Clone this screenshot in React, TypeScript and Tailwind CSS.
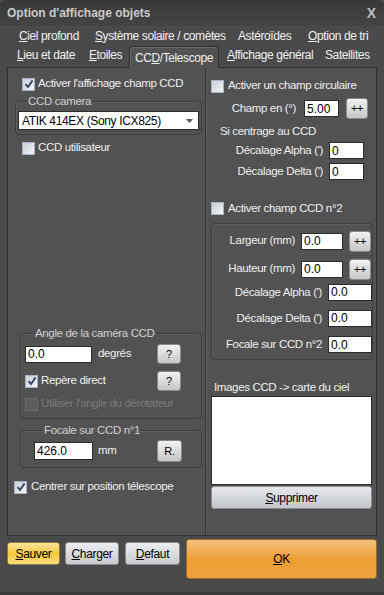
import React from 'react'

function Check({ checked = false, disabled = false }: { checked?: boolean; disabled?: boolean }) {
  return (
    <span
      className={
        disabled
          ? 'w-[13px] h-[13px] shrink-0 flex items-center justify-center border border-[#6a6a6a] bg-[#5d5d5d]'
          : 'w-[13px] h-[13px] shrink-0 flex items-center justify-center border border-[#a7b2c4] bg-linear-to-br from-[#c9ced6] to-[#f5f5f5]'
      }
    >
      {checked && (
        <svg width="10" height="10" viewBox="0 0 10 10">
          <path d="M1.5 5.2 L4 8 L8.6 1.4" stroke="#34476b" strokeWidth="1.9" fill="none" />
        </svg>
      )}
    </span>
  )
}

function Field({ value, className }: { value: string; className: string }) {
  return (
    <div className={`bg-white border border-[#2b2b2b] text-black text-[12px] tracking-normal leading-none flex items-center px-[2px] shrink-0 ${className}`}>
      {value}
    </div>
  )
}

function Btn({ label, className }: { label: string; className: string }) {
  return (
    <button className={`shrink-0 bg-linear-to-b from-[#f2f2f2] to-[#c6c6c6] border border-[#8a8a8a] rounded-[3px] text-black text-[11px] leading-none flex items-center justify-center ${className}`}>
      {label}
    </button>
  )
}

function Group({ legend, className, children }: { legend?: string; className: string; children: React.ReactNode }) {
  return (
    <fieldset className={`border border-[#3f3f3f] rounded-[4px] shadow-[inset_1px_1px_0_#5e5e5e] ${className}`}>
      {legend && <legend className="ml-[9px] px-[1px] text-[#cfcfcf] leading-[14px]">{legend}</legend>}
      {children}
    </fieldset>
  )
}

function Row({ label, labelW, children }: { label: string; labelW: string; children: React.ReactNode }) {
  return (
    <div className="flex items-center">
      <span className={`text-right shrink-0 ${labelW}`}>{label}</span>
      {children}
    </div>
  )
}

export default function App() {
  return (
    <div className="w-[384px] h-[595px] bg-[#4a4a4a] flex flex-col font-['Liberation_Sans',Arial,sans-serif] text-[11.5px] tracking-[-0.35px] text-[#f0f0f0] overflow-hidden border-b-[3px] border-[#3a3a3a]">
      {/* title bar */}
      <div className="h-[26px] shrink-0 bg-linear-to-b from-[#3a3a3a] to-[#444444] rounded-t-[6px] flex items-center justify-between pl-[7px] pr-[8px] tracking-normal">
        <span className="font-bold text-[12px] text-[#c9c9c9]">Option d'affichage objets</span>
        <span className="font-bold text-[14px] text-[#bdbdbd]">X</span>
      </div>

      {/* tabs */}
      <div className="h-[41px] shrink-0 flex flex-col text-[12px] tracking-[-0.4px]">
        <div className="h-[20px] flex items-end pb-[1px]">
          <span className="ml-[19px] w-[76px]"><u>C</u>iel profond</span>
          <span className="w-[143px]"><u>S</u>ystème solaire / comètes</span>
          <span className="w-[70px]">Astéroïdes</span>
          <span><u>O</u>ption de tri</span>
        </div>
        <div className="h-[21px] flex items-end">
          <span className="ml-[17px] w-[72px] pb-[3px]"><u>L</u>ieu et date</span>
          <span className="w-[40px] pb-[3px]"><u>E</u>toiles</span>
          <span className="relative z-10 -mb-px w-[90px] h-[22px] bg-[#525252] border border-b-0 border-[#2f2f2f] rounded-t-[4px] shadow-[inset_1px_1px_0_#6a6a6a] flex items-center justify-center">
            CC<u>D</u>/Telescope
          </span>
          <span className="ml-[8px] w-[98px] pb-[3px]"><u>A</u>ffichage général</span>
          <span className="pb-[3px]">Satellites</span>
        </div>
      </div>

      {/* main panel */}
      <div className="mx-[7px] h-[469px] shrink-0 bg-[#525252] border border-[#2f2f2f] flex">
        {/* left column */}
        <div className="w-[198px] shrink-0 border-r border-[#363636] flex flex-col">
          <label className="mt-[8px] ml-[14px] h-[16px] flex items-center gap-[3px]">
            <Check checked />
            <span>Activer l'affichage champ CCD</span>
          </label>
          <Group legend="CCD camera" className="mt-[2px] ml-[7px] mr-[3px] px-[2px] pb-[4px]">
            <div className="mt-[3px] h-[19px] bg-white border border-[#2b2b2b] text-black text-[12px] flex items-center justify-between pl-[3px] pr-[5px]">
              <span>ATIK 414EX (Sony ICX825)</span>
              <svg width="7" height="4" viewBox="0 0 7 4"><path d="M0 0 H7 L3.5 4 Z" fill="#555" /></svg>
            </div>
          </Group>
          <label className="mt-[5px] ml-[14px] h-[16px] flex items-center gap-[3px]">
            <Check />
            <span>CCD utilisateur</span>
          </label>

          <Group legend="Angle de la caméra CCD" className="mt-[170px] ml-[12px] mr-[3px] pl-[4px] pb-[6px]">
            <div className="mt-[4px] flex items-center h-[20px]">
              <Field value="0.0" className="w-[67px] h-[17px]" />
              <span className="ml-[6px] w-[59px]">degrés</span>
              <Btn label="?" className="w-[24px] h-[20px]" />
            </div>
            <div className="mt-[7px] flex items-center h-[20px]">
              <Check checked />
              <span className="ml-[3px] w-[116px]">Repère direct</span>
              <Btn label="?" className="w-[24px] h-[20px]" />
            </div>
            <div className="mt-[5px] flex items-center h-[16px] text-[#7c7c7c]">
              <Check disabled />
              <span className="ml-[3px]">Utiliser l'angle du dérotateur</span>
            </div>
          </Group>

          <Group legend="Focale sur CCD n°1" className="mt-[4px] ml-[12px] mr-[3px] pl-[13px] pb-[5px]">
            <div className="mt-[3px] flex items-center h-[22px]">
              <Field value="426.0" className="w-[59px] h-[18px]" />
              <span className="ml-[5px] w-[59px]">mm</span>
              <Btn label="R." className="w-[25px] h-[22px]" />
            </div>
          </Group>

          <label className="mt-[11px] ml-[6px] h-[16px] flex items-center gap-[4px]">
            <Check checked />
            <span>Centrer sur position télescope</span>
          </label>
        </div>

        {/* right column */}
        <div className="flex-1 border-l border-[#5c5c5c] flex flex-col pl-[4px] pr-[2px]">
          <label className="mt-[10px] h-[16px] flex items-center gap-[4px]">
            <Check />
            <span>Activer un champ circulaire</span>
          </label>
          <div className="mt-[4px] h-[21px] flex items-center">
            <span className="w-[85px] text-right">Champ en (°)</span>
            <Field value="5.00" className="ml-[8px] w-[35px] h-[17px]" />
            <Btn label="++" className="ml-[7px] w-[22px] h-[21px]" />
          </div>
          <span className="mt-[5px] ml-[9px] h-[14px] leading-[14px]">Si centrage au CCD</span>
          <div className="mt-[4px] flex flex-col gap-[4px]">
            <Row label="Décalage Alpha (')" labelW="w-[112px]">
              <Field value="0" className="ml-[6px] w-[35px] h-[17px]" />
            </Row>
            <Row label="Décalage Delta (')" labelW="w-[112px]">
              <Field value="0" className="ml-[6px] w-[35px] h-[17px]" />
            </Row>
          </div>
          <label className="mt-[20px] h-[16px] flex items-center gap-[4px]">
            <Check />
            <span>Activer champ CCD n°2</span>
          </label>
          <Group className="mt-[6px] mr-[1px] pt-[7px] pb-[6px]">
            <div className="flex flex-col">
              <div className="h-[21px] flex items-center">
                <span className="w-[83px] text-right">Largeur (mm)</span>
                <Field value="0.0" className="ml-[6px] w-[42px] h-[17px]" />
                <Btn label="++" className="ml-[6px] w-[22px] h-[21px]" />
              </div>
              <div className="mt-[7px] h-[21px] flex items-center">
                <span className="w-[83px] text-right">Hauteur (mm)</span>
                <Field value="0.0" className="ml-[6px] w-[42px] h-[17px]" />
                <Btn label="++" className="ml-[6px] w-[22px] h-[21px]" />
              </div>
              <div className="mt-[4px] flex flex-col gap-[9px]">
                <Row label="Décalage Alpha (')" labelW="w-[110px]">
                  <Field value="0.0" className="ml-[6px] w-[44px] h-[17px]" />
                </Row>
                <Row label="Décalage Delta (')" labelW="w-[110px]">
                  <Field value="0.0" className="ml-[6px] w-[44px] h-[17px]" />
                </Row>
                <Row label="Focale sur CCD n°2" labelW="w-[110px]">
                  <Field value="0.0" className="ml-[6px] w-[44px] h-[17px]" />
                </Row>
              </div>
            </div>
          </Group>
          <span className="mt-[20px] ml-[3px] h-[14px] leading-[14px]">Images CCD -&gt; carte du ciel</span>
          <div className="mt-[2px] mr-[2px] h-[89px] bg-white border border-[#2b2b2b]" />
          <button className="mt-[1px] mr-[2px] h-[23px] bg-linear-to-b from-[#e6e8ec] to-[#c3c7cc] border border-[#8c8c8c] rounded-[3px] text-black text-[12px]">
            <u>S</u>upprimer
          </button>
        </div>
      </div>

      {/* bottom buttons */}
      <div className="mx-[7px] mt-[3px] flex items-start text-[12px] text-black">
        <button className="mt-[3px] w-[53px] h-[23px] rounded-[3px] border border-[#8a7a40] bg-linear-to-b from-[#fde59a] via-[#f5c93a] to-[#f8dc7c]">
          <u>S</u>auver
        </button>
        <button className="mt-[3px] ml-[5px] w-[54px] h-[23px] rounded-[3px] border border-[#8a8a8a] bg-linear-to-b from-[#eceef1] to-[#c7cbd0]">
          <u>C</u>harger
        </button>
        <button className="mt-[3px] ml-[6px] w-[55px] h-[23px] rounded-[3px] border border-[#8a8a8a] bg-linear-to-b from-[#eceef1] to-[#c7cbd0]">
          <u>D</u>efaut
        </button>
        <button className="ml-[6px] flex-1 h-[40px] rounded-[3px] border border-[#9a6a2a] bg-linear-to-b from-[#f4c27c] via-[#ee9e34] to-[#eea23e]">
          <u>O</u>K
        </button>
      </div>
    </div>
  )
}
